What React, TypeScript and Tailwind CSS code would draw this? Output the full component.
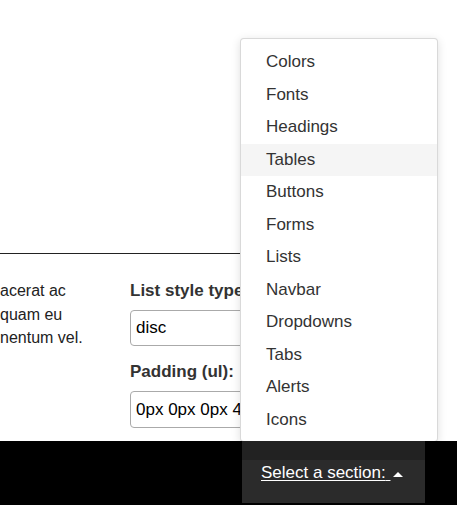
import React from "react";

const items = [
  "Colors",
  "Fonts",
  "Headings",
  "Tables",
  "Buttons",
  "Forms",
  "Lists",
  "Navbar",
  "Dropdowns",
  "Tabs",
  "Alerts",
  "Icons",
];

export default function App() {
  return (
    <div
      className="relative w-[457px] h-[505px] overflow-hidden bg-white text-[#333]"
      style={{ fontFamily: '"Liberation Sans", Arial, sans-serif' }}
    >
      <div className="h-[254px] w-[240px] border-b border-[#222]" />
      <div className="flex h-[187px] pt-[25px]">
        <div className="w-[130px] text-[16px] leading-[23.5px] text-[#222] whitespace-nowrap">
          <div>acerat ac</div>
          <div>quam eu</div>
          <div>nentum vel.</div>
        </div>
        <div className="flex flex-col w-[220px]">
          <div className="text-[17px] font-bold leading-[24px] h-[24px] whitespace-nowrap">
            List style type:
          </div>
          <div className="mt-[7px] h-[36px] w-[200px] rounded-[4px] border border-[#aaa] pl-[5px] flex items-center text-[17px] text-[#000]">
            disc
          </div>
          <div className="mt-[14px] text-[17px] font-bold leading-[24px] h-[24px] whitespace-nowrap">
            Padding (ul):
          </div>
          <div className="mt-[7px] h-[37px] w-[200px] rounded-[4px] border border-[#aaa] pl-[5px] flex items-center text-[17px] text-[#000] whitespace-nowrap overflow-hidden">
            0px 0px 0px 40px
          </div>
        </div>
      </div>
      <div className="relative z-20 h-[64px] bg-black flex pl-[242px]">
        <div className="w-[183px] h-[62px] bg-[#222] flex flex-col">
          <div className="h-[19px]" />
          <div className="h-[43px] bg-[#2b2b2b] pl-[19px] pt-[1px] flex items-start">
            <span className="text-[17px] leading-[24px] text-white underline decoration-1 underline-offset-[2px] whitespace-pre">
              Select a section:{" "}
            </span>
            <span className="ml-[3px] mt-[11px] w-0 h-0 border-l-[5px] border-r-[5px] border-b-[5px] border-l-transparent border-r-transparent border-b-white" />
          </div>
        </div>
      </div>
      <div className="absolute z-10 left-[240px] top-[38px] w-[198px] h-[404px] bg-white rounded-[4px] border border-[rgba(0,0,0,0.15)] shadow-[0_2px_10px_rgba(0,0,0,0.13)] pt-[7px]">
        {items.map((it) => (
          <div
            key={it}
            className={
              "h-[32.5px] leading-[32.5px] pl-[25px] text-[17px] text-[#333] " +
              (it === "Tables" ? "bg-[#f5f5f5]" : "")
            }
          >
            {it}
          </div>
        ))}
      </div>
    </div>
  );
}
